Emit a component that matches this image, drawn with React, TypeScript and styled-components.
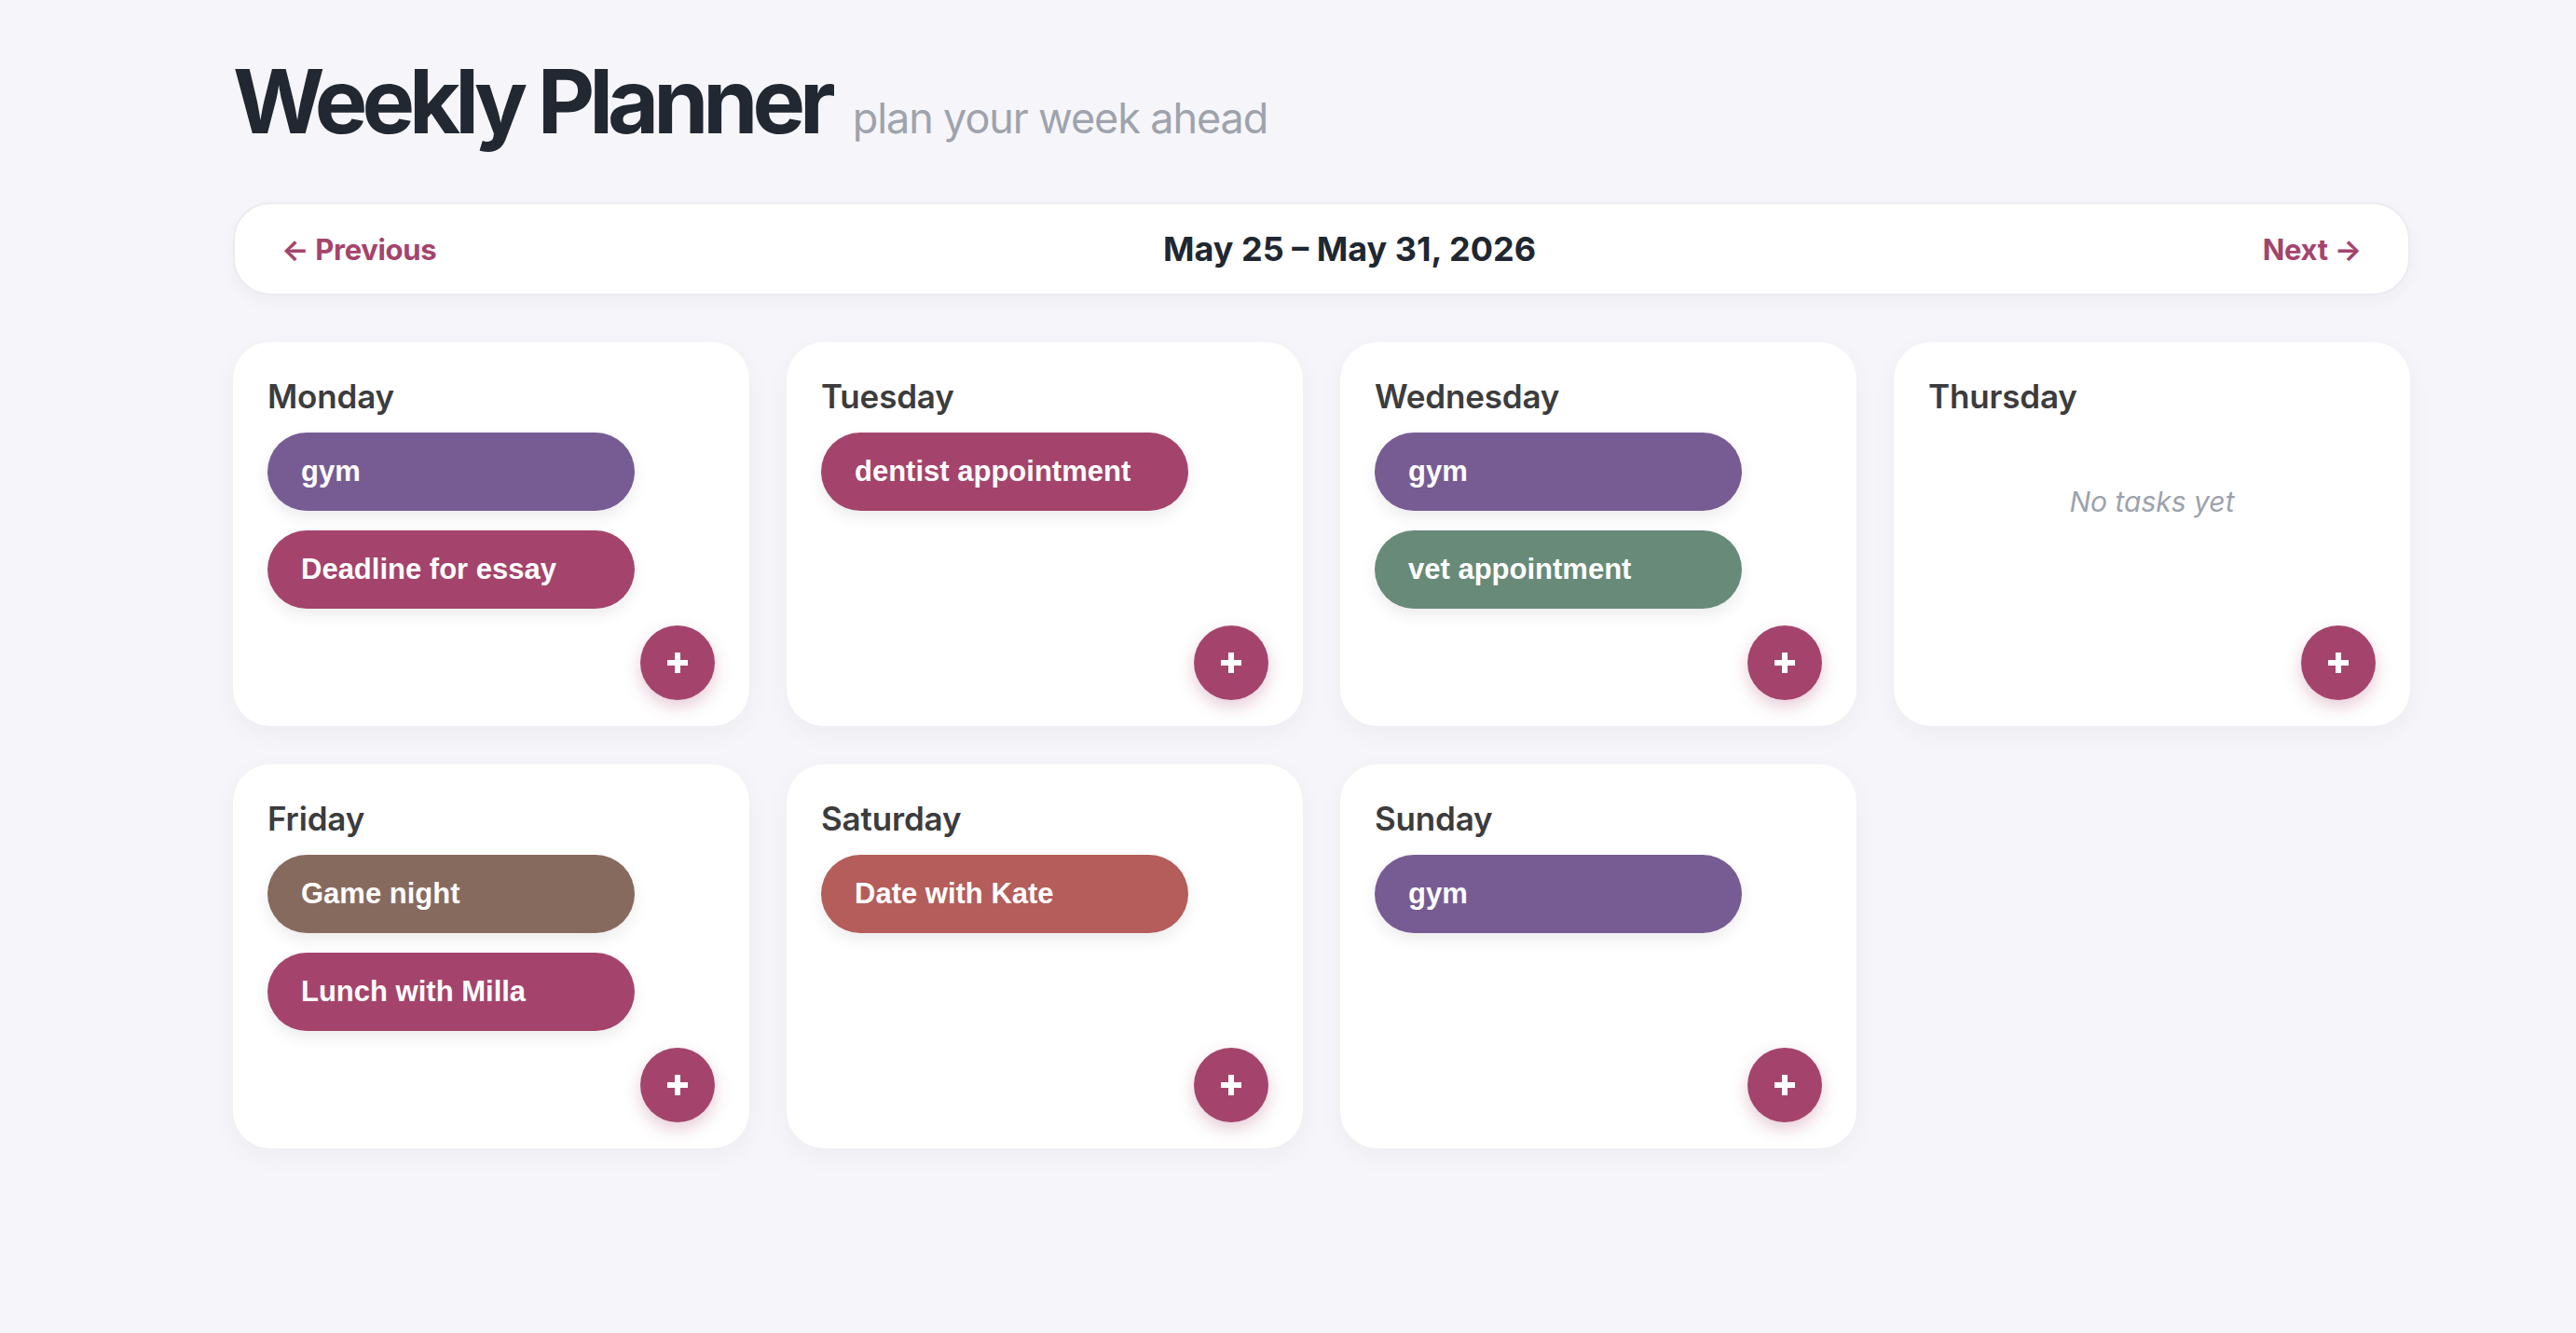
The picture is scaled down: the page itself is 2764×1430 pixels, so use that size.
import React from "react";
import styled, { createGlobalStyle } from "styled-components";

const GlobalStyle = createGlobalStyle`
  html, body {
    margin: 0;
    padding: 0;
    background: #f6f6fa;
  }
  body {
    font-family: Inter, "Noto Sans", sans-serif;
    -webkit-font-smoothing: antialiased;
  }
  * { box-sizing: border-box; }
`;

const Page = styled.div`
  min-height: 1430px;
  padding: 61px 0 60px 250px;
`;

const Container = styled.main`
  width: 2336px;
`;

const Header = styled.header`
  display: flex;
  align-items: baseline;
  gap: 24px;
  margin-bottom: 61px;
`;

const Title = styled.h1`
  margin: 0;
  font-family: Inter, sans-serif;
  font-size: 95px;
  line-height: 1;
  font-weight: 700;
  letter-spacing: -0.063em;
  color: #212832;
`;

const Subtitle = styled.span`
  font-family: Inter, sans-serif;
  font-size: 45px;
  font-weight: 400;
  letter-spacing: -0.025em;
  color: #9ea3ad;
`;

const NavBar = styled.nav`
  height: 100px;
  display: flex;
  align-items: center;
  justify-content: space-between;
  padding: 0 50px;
  background: #ffffff;
  border: 2px solid #ebebf1;
  border-radius: 40px;
  box-shadow: 0 6px 18px rgba(30, 30, 60, 0.04);
`;

const NavButton = styled.button`
  border: none;
  background: none;
  padding: 0;
  cursor: pointer;
  font-family: Inter, sans-serif;
  font-size: 31px;
  font-weight: 650;
  letter-spacing: -0.01em;
  color: #a4446c;
`;

const DateLabel = styled.div`
  font-family: Inter, sans-serif;
  font-size: 36px;
  font-weight: 700;
  color: #1f2731;
`;

const Grid = styled.section`
  margin-top: 50px;
  display: grid;
  grid-template-columns: repeat(4, 1fr);
  column-gap: 40px;
  row-gap: 41px;
`;

const Card = styled.article`
  min-height: 412px;
  display: flex;
  flex-direction: column;
  padding: 37px 37px 28px 37px;
  background: #ffffff;
  border-radius: 40px;
  box-shadow: 0 8px 24px rgba(30, 30, 70, 0.05);
`;

const DayName = styled.h2`
  margin: 0;
  font-family: Inter, sans-serif;
  font-size: 35px;
  line-height: 1.2;
  font-weight: 600;
  letter-spacing: -0.005em;
  color: #3c3c3e;
`;

const TaskList = styled.div`
  margin-top: 18px;
  display: flex;
  flex-direction: column;
  gap: 21px;
`;

const Task = styled.div<{ $color: string }>`
  width: 394px;
  height: 84px;
  display: flex;
  align-items: center;
  padding-left: 36px;
  border-radius: 42px;
  background: ${(p) => p.$color};
  color: #ffffff;
  font-family: "Liberation Sans", Arial, sans-serif;
  font-weight: 700;
  font-size: 31px;
  box-shadow: 0 7px 16px rgba(40, 40, 60, 0.09);
`;

const Empty = styled.p`
  margin: 0;
  padding-top: 74px;
  text-align: center;
  font-family: Inter, sans-serif;
  font-style: italic;
  font-size: 30px;
  line-height: 1.2;
  color: #9ca2ad;
`;

const AddButton = styled.button`
  margin-top: auto;
  align-self: flex-end;
  width: 80px;
  height: 80px;
  border: none;
  border-radius: 50%;
  background: #a4446c;
  display: flex;
  align-items: center;
  justify-content: center;
  padding: 0;
  cursor: pointer;
  box-shadow: 0 7px 18px rgba(164, 68, 108, 0.28);
`;

const COLORS = {
  purple: "#775c94",
  magenta: "#a4446c",
  green: "#688a79",
  brown: "#876a5e",
  coral: "#b45d5b",
};

type TaskItem = { label: string; color: string };
const days: { name: string; tasks: TaskItem[] }[] = [
  {
    name: "Monday",
    tasks: [
      { label: "gym", color: COLORS.purple },
      { label: "Deadline for essay", color: COLORS.magenta },
    ],
  },
  { name: "Tuesday", tasks: [{ label: "dentist appointment", color: COLORS.magenta }] },
  {
    name: "Wednesday",
    tasks: [
      { label: "gym", color: COLORS.purple },
      { label: "vet appointment", color: COLORS.green },
    ],
  },
  { name: "Thursday", tasks: [] },
  {
    name: "Friday",
    tasks: [
      { label: "Game night", color: COLORS.brown },
      { label: "Lunch with Milla", color: COLORS.magenta },
    ],
  },
  { name: "Saturday", tasks: [{ label: "Date with Kate", color: COLORS.coral }] },
  { name: "Sunday", tasks: [{ label: "gym", color: COLORS.purple }] },
];

const PlusIcon = () => (
  <svg width="26" height="26" viewBox="0 0 26 26" aria-hidden="true">
    <path d="M13 2v22M2 13h22" stroke="#ffffff" strokeWidth="6" strokeLinecap="butt" />
  </svg>
);

export default function App() {
  return (
    <>
      <GlobalStyle />
      <Page>
        <Container>
          <Header>
            <Title>Weekly Planner</Title>
            <Subtitle>plan your week ahead</Subtitle>
          </Header>
          <NavBar>
            <NavButton>← Previous</NavButton>
            <DateLabel>May 25 – May 31, 2026</DateLabel>
            <NavButton>Next →</NavButton>
          </NavBar>
          <Grid>
            {days.map((d) => (
              <Card key={d.name}>
                <DayName>{d.name}</DayName>
                {d.tasks.length > 0 ? (
                  <TaskList>
                    {d.tasks.map((t, i) => (
                      <Task key={i} $color={t.color}>
                        {t.label}
                      </Task>
                    ))}
                  </TaskList>
                ) : (
                  <Empty>No tasks yet</Empty>
                )}
                <AddButton aria-label={`Add task to ${d.name}`}>
                  <PlusIcon />
                </AddButton>
              </Card>
            ))}
          </Grid>
        </Container>
      </Page>
    </>
  );
}
